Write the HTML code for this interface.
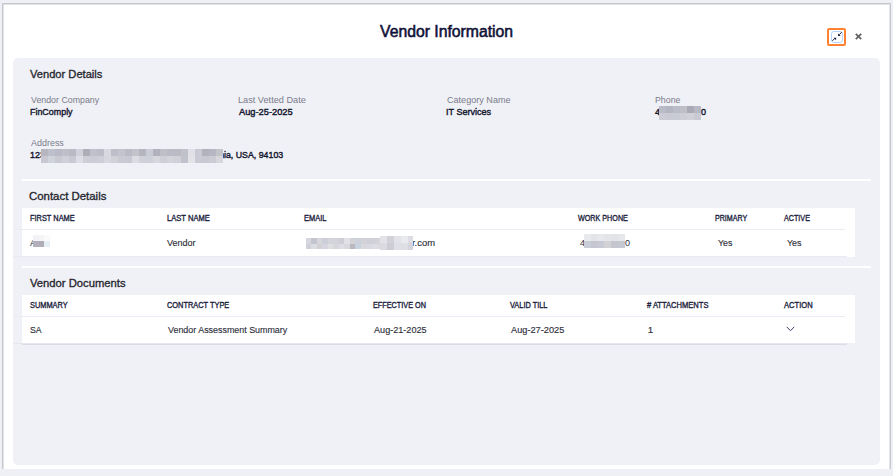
<!DOCTYPE html><html><head><meta charset="utf-8"><style>
*{margin:0;padding:0;box-sizing:border-box}
html,body{width:893px;height:476px;overflow:hidden;background:#eff0f5;font-family:"Liberation Sans",sans-serif;position:relative}
.t{position:absolute;white-space:nowrap;transform-origin:0 0}
.b,.r{position:absolute}
svg{position:absolute;overflow:visible}
</style></head><body>
<div class="r" style="left:2px;top:3px;width:889px;height:466px;background:#fff;border:1px solid #c5c7cd;border-bottom:none;box-shadow:inset 1px 1px 0 #e2e3e8,inset -1px 0 0 #e2e3e8"></div>
<div class="r" style="left:827px;top:28px;width:19px;height:18px;border:2px solid #ff8233;border-radius:2px"></div>
<div class="r" style="left:830.7px;top:30.8px;width:12.5px;height:12px;border:1.5px solid #b3d5fc;border-radius:3px"></div>
<svg style="left:831px;top:31px" width="12" height="12" viewBox="0 0 12 12">
<path d="M10.7 1.2 L8.2 3.7" stroke="#141840" stroke-width="1" fill="none"/>
<path d="M7.1 4.9 L9.6 4.9 L7.1 2.4 Z" fill="#141840"/>
<path d="M1.4 9.8 L3.9 7.3" stroke="#141840" stroke-width="1" fill="none"/>
<path d="M5.1 6.8 L2.6 6.8 L5.1 9.3 Z" fill="#141840"/>
</svg>
<svg style="left:855px;top:33px" width="7" height="7" viewBox="0 0 7 7">
<path d="M0.8 0.8 L6.2 6.2 M6.2 0.8 L0.8 6.2" stroke="#636363" stroke-width="1.75"/></svg>
<div class="r" style="left:13px;top:58px;width:866.5px;height:407px;background:#f0f1f6;border-radius:5px"></div>
<div class="r" style="left:22px;top:179px;width:849px;height:2px;background:#fff"></div>
<div class="r" style="left:22px;top:266px;width:849px;height:2px;background:#fff"></div>
<div class="r" style="left:22px;top:208px;width:833px;height:48.5px;background:#fff"></div>
<div class="r" style="left:13px;top:229px;width:832px;height:1px;background:#ebebf6"></div>
<div class="r" style="left:13px;top:256px;width:834px;height:1px;background:#eaeaf5"></div>
<div class="r" style="left:22px;top:295px;width:833px;height:48px;background:#fff"></div>
<div class="r" style="left:13px;top:316px;width:832px;height:1px;background:#ebebf6"></div>
<div class="r" style="left:13px;top:343px;width:834px;height:1px;background:#e6e6f1"></div><div class="r" style="left:22px;top:343.5px;width:825px;height:1.2px;background:#dddce4"></div>
<svg style="left:786px;top:326px" width="9" height="6" viewBox="0 0 9 6">
<path d="M0.8 0.9 L4.5 4.7 L8.2 0.9" stroke="#3a3f6a" stroke-width="1" fill="none"/></svg>
<div class="t" style="left:379.93px;top:24.06px;font-size:16.0px;line-height:16.0px;color:#0e1136;font-weight:400;transform:scaleX(0.984);-webkit-text-stroke:0.55px #0e1136;">Vendor Information</div>
<div class="t" style="left:30.15px;top:69.13px;font-size:11.3px;line-height:11.3px;color:#25262f;font-weight:400;transform:scaleX(0.985);-webkit-text-stroke:0.32px #25262f;">Vendor Details</div>
<div class="t" style="left:29.32px;top:191.03px;font-size:11.3px;line-height:11.3px;color:#25262f;font-weight:400;transform:scaleX(1.010);-webkit-text-stroke:0.32px #25262f;">Contact Details</div>
<div class="t" style="left:29.85px;top:278.03px;font-size:11.3px;line-height:11.3px;color:#25262f;font-weight:400;transform:scaleX(0.994);-webkit-text-stroke:0.32px #25262f;">Vendor Documents</div>
<div class="t" style="left:30.76px;top:94.76px;font-size:9.5px;line-height:9.5px;color:#7a7b8b;font-weight:400;transform:scaleX(0.928);">Vendor Company</div>
<div class="t" style="left:238.25px;top:94.76px;font-size:9.5px;line-height:9.5px;color:#7a7b8b;font-weight:400;transform:scaleX(0.965);">Last Vetted Date</div>
<div class="t" style="left:446.84px;top:94.76px;font-size:9.5px;line-height:9.5px;color:#7a7b8b;font-weight:400;transform:scaleX(0.955);">Category Name</div>
<div class="t" style="left:654.98px;top:94.76px;font-size:9.5px;line-height:9.5px;color:#7a7b8b;font-weight:400;transform:scaleX(0.925);">Phone</div>
<div class="t" style="left:30.88px;top:138.16px;font-size:9.5px;line-height:9.5px;color:#7a7b8b;font-weight:400;transform:scaleX(0.942);">Address</div>
<div class="t" style="left:30.07px;top:107.00px;font-size:9.8px;line-height:9.8px;color:#15172f;font-weight:400;transform:scaleX(0.909);-webkit-text-stroke:0.42px #15172f;">FinComply</div>
<div class="t" style="left:238.98px;top:107.00px;font-size:9.8px;line-height:9.8px;color:#15172f;font-weight:400;transform:scaleX(0.946);-webkit-text-stroke:0.42px #15172f;">Aug-25-2025</div>
<div class="t" style="left:446.46px;top:107.00px;font-size:9.8px;line-height:9.8px;color:#15172f;font-weight:400;transform:scaleX(0.925);-webkit-text-stroke:0.42px #15172f;">IT Services</div>
<div class="t" style="left:223.51px;top:150.00px;font-size:9.8px;line-height:9.8px;color:#15172f;font-weight:400;transform:scaleX(0.898);-webkit-text-stroke:0.42px #15172f;">ia, USA, 94103</div>
<div class="t" style="left:29.59px;top:213.69px;font-size:8.4px;line-height:8.4px;color:#1c1e3e;font-weight:400;transform:scaleX(0.884);-webkit-text-stroke:0.35px #1c1e3e;">FIRST NAME</div>
<div class="t" style="left:166.88px;top:213.69px;font-size:8.4px;line-height:8.4px;color:#1c1e3e;font-weight:400;transform:scaleX(0.905);-webkit-text-stroke:0.35px #1c1e3e;">LAST NAME</div>
<div class="t" style="left:303.59px;top:213.69px;font-size:8.4px;line-height:8.4px;color:#1c1e3e;font-weight:400;transform:scaleX(0.889);-webkit-text-stroke:0.35px #1c1e3e;">EMAIL</div>
<div class="t" style="left:578.27px;top:213.69px;font-size:8.4px;line-height:8.4px;color:#1c1e3e;font-weight:400;transform:scaleX(0.857);-webkit-text-stroke:0.35px #1c1e3e;">WORK PHONE</div>
<div class="t" style="left:715.22px;top:213.69px;font-size:8.4px;line-height:8.4px;color:#1c1e3e;font-weight:400;transform:scaleX(0.848);-webkit-text-stroke:0.35px #1c1e3e;">PRIMARY</div>
<div class="t" style="left:783.99px;top:213.69px;font-size:8.4px;line-height:8.4px;color:#1c1e3e;font-weight:400;transform:scaleX(0.857);-webkit-text-stroke:0.35px #1c1e3e;">ACTIVE</div>
<div class="t" style="left:29.96px;top:300.79px;font-size:8.4px;line-height:8.4px;color:#1c1e3e;font-weight:400;transform:scaleX(0.884);-webkit-text-stroke:0.35px #1c1e3e;">SUMMARY</div>
<div class="t" style="left:166.92px;top:300.79px;font-size:8.4px;line-height:8.4px;color:#1c1e3e;font-weight:400;transform:scaleX(0.884);-webkit-text-stroke:0.35px #1c1e3e;">CONTRACT TYPE</div>
<div class="t" style="left:372.60px;top:300.79px;font-size:8.4px;line-height:8.4px;color:#1c1e3e;font-weight:400;transform:scaleX(0.869);-webkit-text-stroke:0.35px #1c1e3e;">EFFECTIVE ON</div>
<div class="t" style="left:510.07px;top:300.79px;font-size:8.4px;line-height:8.4px;color:#1c1e3e;font-weight:400;transform:scaleX(0.881);-webkit-text-stroke:0.35px #1c1e3e;">VALID TILL</div>
<div class="t" style="left:646.97px;top:300.79px;font-size:8.4px;line-height:8.4px;color:#1c1e3e;font-weight:400;transform:scaleX(0.903);-webkit-text-stroke:0.35px #1c1e3e;"># ATTACHMENTS</div>
<div class="t" style="left:783.59px;top:300.79px;font-size:8.4px;line-height:8.4px;color:#1c1e3e;font-weight:400;transform:scaleX(0.908);-webkit-text-stroke:0.35px #1c1e3e;">ACTION</div>
<div class="t" style="left:167.46px;top:237.75px;font-size:9.75px;line-height:9.75px;color:#2f303b;font-weight:400;transform:scaleX(0.925);-webkit-text-stroke:0.15px #2f303b;">Vendor</div>
<div class="t" style="left:412.37px;top:237.75px;font-size:9.75px;line-height:9.75px;color:#2f303b;font-weight:400;transform:scaleX(0.967);-webkit-text-stroke:0.15px #2f303b;">r.com</div>
<div class="t" style="left:717.81px;top:237.75px;font-size:9.75px;line-height:9.75px;color:#2f303b;font-weight:400;transform:scaleX(0.906);-webkit-text-stroke:0.15px #2f303b;">Yes</div>
<div class="t" style="left:786.50px;top:237.75px;font-size:9.75px;line-height:9.75px;color:#2f303b;font-weight:400;transform:scaleX(0.913);-webkit-text-stroke:0.15px #2f303b;">Yes</div>
<div class="t" style="left:29.90px;top:324.75px;font-size:9.75px;line-height:9.75px;color:#2f303b;font-weight:400;transform:scaleX(0.892);-webkit-text-stroke:0.15px #2f303b;">SA</div>
<div class="t" style="left:167.76px;top:324.75px;font-size:9.75px;line-height:9.75px;color:#2f303b;font-weight:400;transform:scaleX(0.913);-webkit-text-stroke:0.15px #2f303b;">Vendor Assessment Summary</div>
<div class="t" style="left:373.88px;top:324.75px;font-size:9.75px;line-height:9.75px;color:#2f303b;font-weight:400;transform:scaleX(0.933);-webkit-text-stroke:0.15px #2f303b;">Aug-21-2025</div>
<div class="t" style="left:511.48px;top:324.75px;font-size:9.75px;line-height:9.75px;color:#2f303b;font-weight:400;transform:scaleX(0.945);-webkit-text-stroke:0.15px #2f303b;">Aug-27-2025</div>
<div class="t" style="left:647.86px;top:324.75px;font-size:9.75px;line-height:9.75px;color:#2f303b;font-weight:400;transform:scaleX(1.000);-webkit-text-stroke:0.15px #2f303b;">1</div>
<div class="t" style="left:655.49px;top:107.00px;font-size:9.8px;line-height:9.8px;color:#15172f;font-weight:400;transform:scaleX(0.920);-webkit-text-stroke:0.42px #15172f;">4</div>
<div class="t" style="left:700.55px;top:107.00px;font-size:9.8px;line-height:9.8px;color:#15172f;font-weight:400;transform:scaleX(0.920);-webkit-text-stroke:0.42px #15172f;">0</div>
<div class="t" style="left:218.69px;top:150.00px;font-size:9.8px;line-height:9.8px;color:#15172f;font-weight:400;transform:scaleX(0.940);-webkit-text-stroke:0.42px #15172f;">n</div>
<div class="t" style="left:30.21px;top:150.00px;font-size:9.8px;line-height:9.8px;color:#15172f;font-weight:400;transform:scaleX(0.920);-webkit-text-stroke:0.42px #15172f;">123</div>
<div class="t" style="left:29.98px;top:237.75px;font-size:9.75px;line-height:9.75px;color:#2f303b;font-weight:400;transform:scaleX(0.930);">A</div>
<div class="t" style="left:579.59px;top:237.75px;font-size:9.75px;line-height:9.75px;color:#2f303b;font-weight:400;transform:scaleX(0.930);">4</div>
<div class="t" style="left:624.95px;top:237.75px;font-size:9.75px;line-height:9.75px;color:#2f303b;font-weight:400;transform:scaleX(0.930);">0</div>
<div class="b" style="left:659.00px;top:106.00px;width:7.02px;height:6.92px;background:#b9bbc6"></div><div class="b" style="left:666.00px;top:106.00px;width:7.02px;height:6.92px;background:#b3b5c0"></div><div class="b" style="left:673.00px;top:106.00px;width:7.02px;height:6.92px;background:#babcc8"></div><div class="b" style="left:680.00px;top:106.00px;width:7.02px;height:6.92px;background:#bfbfc8"></div><div class="b" style="left:687.00px;top:106.00px;width:7.02px;height:6.92px;background:#a9aab6"></div><div class="b" style="left:694.00px;top:106.00px;width:7.02px;height:6.92px;background:#b8b9c4"></div><div class="b" style="left:659.00px;top:112.90px;width:7.02px;height:6.92px;background:#cbccd5"></div><div class="b" style="left:666.00px;top:112.90px;width:7.02px;height:6.92px;background:#c9cad3"></div><div class="b" style="left:673.00px;top:112.90px;width:7.02px;height:6.92px;background:#c9cbd4"></div><div class="b" style="left:680.00px;top:112.90px;width:7.02px;height:6.92px;background:#cdced6"></div><div class="b" style="left:687.00px;top:112.90px;width:7.02px;height:6.92px;background:#d0d1d9"></div><div class="b" style="left:694.00px;top:112.90px;width:7.02px;height:6.92px;background:#c9cad3"></div>
<div class="b" style="left:41.00px;top:149.00px;width:7.02px;height:7.02px;background:#b6b5c0"></div><div class="b" style="left:48.00px;top:149.00px;width:7.02px;height:7.02px;background:#bebfca"></div><div class="b" style="left:55.00px;top:149.00px;width:7.02px;height:7.02px;background:#b9bac5"></div><div class="b" style="left:62.00px;top:149.00px;width:7.02px;height:7.02px;background:#bfbfc9"></div><div class="b" style="left:69.00px;top:149.00px;width:7.02px;height:7.02px;background:#b8bac6"></div><div class="b" style="left:76.00px;top:149.00px;width:7.02px;height:7.02px;background:#d0d1da"></div><div class="b" style="left:83.00px;top:149.00px;width:7.02px;height:7.02px;background:#aeadb8"></div><div class="b" style="left:90.00px;top:149.00px;width:7.02px;height:7.02px;background:#c0c1cc"></div><div class="b" style="left:97.00px;top:149.00px;width:7.02px;height:7.02px;background:#bcbdc8"></div><div class="b" style="left:104.00px;top:149.00px;width:7.02px;height:7.02px;background:#d7d8e0"></div><div class="b" style="left:111.00px;top:149.00px;width:7.02px;height:7.02px;background:#bebec8"></div><div class="b" style="left:118.00px;top:149.00px;width:7.02px;height:7.02px;background:#c3c4ce"></div><div class="b" style="left:125.00px;top:149.00px;width:7.02px;height:7.02px;background:#b9bbc6"></div><div class="b" style="left:132.00px;top:149.00px;width:7.02px;height:7.02px;background:#c3c3cc"></div><div class="b" style="left:139.00px;top:149.00px;width:7.02px;height:7.02px;background:#b5b5bf"></div><div class="b" style="left:146.00px;top:149.00px;width:7.02px;height:7.02px;background:#c9ccd6"></div><div class="b" style="left:153.00px;top:149.00px;width:7.02px;height:7.02px;background:#b0b1bc"></div><div class="b" style="left:160.00px;top:149.00px;width:7.02px;height:7.02px;background:#bfbfc8"></div><div class="b" style="left:167.00px;top:149.00px;width:7.02px;height:7.02px;background:#bbbbc5"></div><div class="b" style="left:174.00px;top:149.00px;width:7.02px;height:7.02px;background:#bbbbc5"></div><div class="b" style="left:181.00px;top:149.00px;width:7.02px;height:7.02px;background:#c1c1ca"></div><div class="b" style="left:188.00px;top:149.00px;width:7.02px;height:7.02px;background:#e0e0e6"></div><div class="b" style="left:195.00px;top:149.00px;width:7.02px;height:7.02px;background:#c9cad3"></div><div class="b" style="left:202.00px;top:149.00px;width:7.02px;height:7.02px;background:#b3b2bc"></div><div class="b" style="left:209.00px;top:149.00px;width:7.02px;height:7.02px;background:#b6b7c2"></div><div class="b" style="left:216.00px;top:149.00px;width:7.02px;height:7.02px;background:#c3c3ca"></div><div class="b" style="left:41.00px;top:156.00px;width:7.02px;height:7.02px;background:#c7c8d2"></div><div class="b" style="left:48.00px;top:156.00px;width:7.02px;height:7.02px;background:#d0d2dc"></div><div class="b" style="left:55.00px;top:156.00px;width:7.02px;height:7.02px;background:#c9c9d2"></div><div class="b" style="left:62.00px;top:156.00px;width:7.02px;height:7.02px;background:#cfd0d9"></div><div class="b" style="left:69.00px;top:156.00px;width:7.02px;height:7.02px;background:#c8c9d3"></div><div class="b" style="left:76.00px;top:156.00px;width:7.02px;height:7.02px;background:#dcdde5"></div><div class="b" style="left:83.00px;top:156.00px;width:7.02px;height:7.02px;background:#cdced6"></div><div class="b" style="left:90.00px;top:156.00px;width:7.02px;height:7.02px;background:#cbccd5"></div><div class="b" style="left:97.00px;top:156.00px;width:7.02px;height:7.02px;background:#cdced7"></div><div class="b" style="left:104.00px;top:156.00px;width:7.02px;height:7.02px;background:#d6d7df"></div><div class="b" style="left:111.00px;top:156.00px;width:7.02px;height:7.02px;background:#d1d1d7"></div><div class="b" style="left:118.00px;top:156.00px;width:7.02px;height:7.02px;background:#c9cad3"></div><div class="b" style="left:125.00px;top:156.00px;width:7.02px;height:7.02px;background:#c8c9d3"></div><div class="b" style="left:132.00px;top:156.00px;width:7.02px;height:7.02px;background:#dcdce2"></div><div class="b" style="left:139.00px;top:156.00px;width:7.02px;height:7.02px;background:#d0d1d8"></div><div class="b" style="left:146.00px;top:156.00px;width:7.02px;height:7.02px;background:#ced0d9"></div><div class="b" style="left:153.00px;top:156.00px;width:7.02px;height:7.02px;background:#d6d6dc"></div><div class="b" style="left:160.00px;top:156.00px;width:7.02px;height:7.02px;background:#cfcfd7"></div><div class="b" style="left:167.00px;top:156.00px;width:7.02px;height:7.02px;background:#d3d3da"></div><div class="b" style="left:174.00px;top:156.00px;width:7.02px;height:7.02px;background:#d0d1d8"></div><div class="b" style="left:181.00px;top:156.00px;width:7.02px;height:7.02px;background:#c0c2cc"></div><div class="b" style="left:188.00px;top:156.00px;width:7.02px;height:7.02px;background:#e3e3e7"></div><div class="b" style="left:195.00px;top:156.00px;width:7.02px;height:7.02px;background:#c9cad3"></div><div class="b" style="left:202.00px;top:156.00px;width:7.02px;height:7.02px;background:#c7c8d1"></div><div class="b" style="left:209.00px;top:156.00px;width:7.02px;height:7.02px;background:#cbccd4"></div><div class="b" style="left:216.00px;top:156.00px;width:7.02px;height:7.02px;background:#d6d6dc"></div>
<div class="b" style="left:33.00px;top:235.00px;width:5.72px;height:5.82px;background:#f2f2f6"></div><div class="b" style="left:38.70px;top:235.00px;width:5.72px;height:5.82px;background:#f5f5f8"></div><div class="b" style="left:44.40px;top:235.00px;width:5.72px;height:5.82px;background:#fafafb"></div><div class="b" style="left:33.00px;top:240.80px;width:5.72px;height:5.82px;background:#b2afba"></div><div class="b" style="left:38.70px;top:240.80px;width:5.72px;height:5.82px;background:#b0acb8"></div><div class="b" style="left:44.40px;top:240.80px;width:5.72px;height:5.82px;background:#e6eef6"></div>
<div class="b" style="left:306.00px;top:238.00px;width:5.50px;height:5.52px;background:#d5d6de"></div><div class="b" style="left:311.48px;top:238.00px;width:5.50px;height:5.52px;background:#c4c5d0"></div><div class="b" style="left:316.96px;top:238.00px;width:5.50px;height:5.52px;background:#d7d6db"></div><div class="b" style="left:322.44px;top:238.00px;width:5.50px;height:5.52px;background:#ccced9"></div><div class="b" style="left:327.92px;top:238.00px;width:5.50px;height:5.52px;background:#d3d4dc"></div><div class="b" style="left:333.40px;top:238.00px;width:5.50px;height:5.52px;background:#d3d4db"></div><div class="b" style="left:338.88px;top:238.00px;width:5.50px;height:5.52px;background:#cfced6"></div><div class="b" style="left:344.36px;top:238.00px;width:5.50px;height:5.52px;background:#e2e2e6"></div><div class="b" style="left:349.84px;top:238.00px;width:5.50px;height:5.52px;background:#d2d2d7"></div><div class="b" style="left:355.32px;top:238.00px;width:5.50px;height:5.52px;background:#ccd1dc"></div><div class="b" style="left:360.80px;top:238.00px;width:5.50px;height:5.52px;background:#d3d3d7"></div><div class="b" style="left:366.28px;top:238.00px;width:5.50px;height:5.52px;background:#d1d0d9"></div><div class="b" style="left:371.76px;top:238.00px;width:5.50px;height:5.52px;background:#d1d1d8"></div><div class="b" style="left:377.24px;top:238.00px;width:5.50px;height:5.52px;background:#d4d4da"></div><div class="b" style="left:306.00px;top:243.50px;width:5.50px;height:5.52px;background:#cfd0d8"></div><div class="b" style="left:311.48px;top:243.50px;width:5.50px;height:5.52px;background:#dcdde4"></div><div class="b" style="left:316.96px;top:243.50px;width:5.50px;height:5.52px;background:#d2d0d5"></div><div class="b" style="left:322.44px;top:243.50px;width:5.50px;height:5.52px;background:#d5d4df"></div><div class="b" style="left:327.92px;top:243.50px;width:5.50px;height:5.52px;background:#dfdfe2"></div><div class="b" style="left:333.40px;top:243.50px;width:5.50px;height:5.52px;background:#d6d7dd"></div><div class="b" style="left:338.88px;top:243.50px;width:5.50px;height:5.52px;background:#dddde3"></div><div class="b" style="left:344.36px;top:243.50px;width:5.50px;height:5.52px;background:#d8d8de"></div><div class="b" style="left:349.84px;top:243.50px;width:5.50px;height:5.52px;background:#bcb8bd"></div><div class="b" style="left:355.32px;top:243.50px;width:5.50px;height:5.52px;background:#c9d3e0"></div><div class="b" style="left:360.80px;top:243.50px;width:5.50px;height:5.52px;background:#d9d8dc"></div><div class="b" style="left:366.28px;top:243.50px;width:5.50px;height:5.52px;background:#d9d9e1"></div><div class="b" style="left:371.76px;top:243.50px;width:5.50px;height:5.52px;background:#dddde3"></div><div class="b" style="left:377.24px;top:243.50px;width:5.50px;height:5.52px;background:#dadae0"></div>
<div class="b" style="left:380.00px;top:236.00px;width:7.02px;height:6.92px;background:#e2e2e7"></div><div class="b" style="left:387.00px;top:236.00px;width:7.02px;height:6.92px;background:#d2d1d8"></div><div class="b" style="left:394.00px;top:236.00px;width:7.02px;height:6.92px;background:#e1e3e8"></div><div class="b" style="left:401.00px;top:236.00px;width:7.02px;height:6.92px;background:#e9eaee"></div><div class="b" style="left:408.00px;top:236.00px;width:5.02px;height:6.92px;background:#dcdce2"></div><div class="b" style="left:380.00px;top:242.90px;width:7.02px;height:6.92px;background:#dadae0"></div><div class="b" style="left:387.00px;top:242.90px;width:7.02px;height:6.92px;background:#cdcbd4"></div><div class="b" style="left:394.00px;top:242.90px;width:7.02px;height:6.92px;background:#dfe0e5"></div><div class="b" style="left:401.00px;top:242.90px;width:7.02px;height:6.92px;background:#dedfe4"></div><div class="b" style="left:408.00px;top:242.90px;width:5.02px;height:6.92px;background:#d3d4dc"></div>
<div class="b" style="left:583.90px;top:234.00px;width:6.87px;height:6.92px;background:#e8e9ed"></div><div class="b" style="left:590.75px;top:234.00px;width:6.87px;height:6.92px;background:#e3e4e8"></div><div class="b" style="left:597.60px;top:234.00px;width:6.87px;height:6.92px;background:#e7e8ec"></div><div class="b" style="left:604.45px;top:234.00px;width:6.87px;height:6.92px;background:#e4e5e9"></div><div class="b" style="left:611.30px;top:234.00px;width:6.87px;height:6.92px;background:#e2e3e7"></div><div class="b" style="left:618.15px;top:234.00px;width:6.87px;height:6.92px;background:#e6e7eb"></div><div class="b" style="left:583.90px;top:240.90px;width:6.87px;height:6.92px;background:#c8ced8"></div><div class="b" style="left:590.75px;top:240.90px;width:6.87px;height:6.92px;background:#c5c6cf"></div><div class="b" style="left:597.60px;top:240.90px;width:6.87px;height:6.92px;background:#c7cad4"></div><div class="b" style="left:604.45px;top:240.90px;width:6.87px;height:6.92px;background:#d2d1d6"></div><div class="b" style="left:611.30px;top:240.90px;width:6.87px;height:6.92px;background:#c4c5cf"></div><div class="b" style="left:618.15px;top:240.90px;width:6.87px;height:6.92px;background:#c5c8d0"></div>
</body></html>
